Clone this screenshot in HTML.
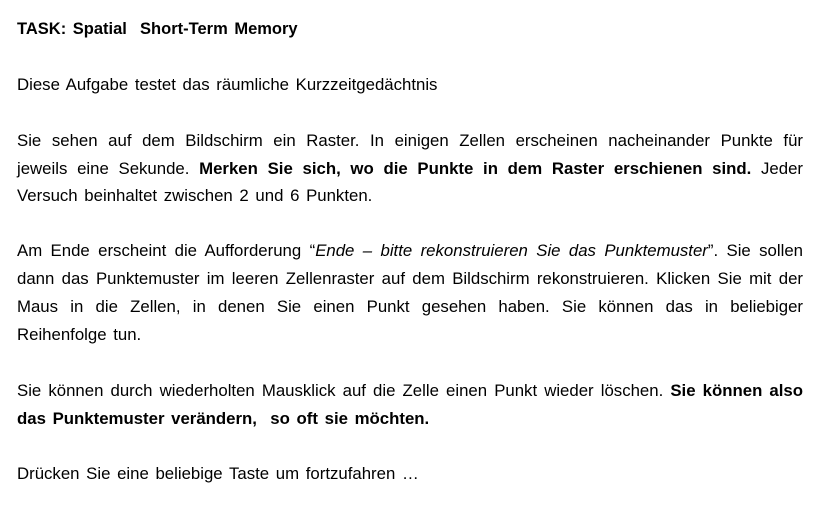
<!DOCTYPE html>
<html><head><meta charset="utf-8"><style>
html,body{margin:0;padding:0;background:#fff;width:830px;height:518px;overflow:hidden}
.l{position:absolute;left:17px;width:786px;height:28px;line-height:28px;font-family:"Liberation Sans",Arial,sans-serif;font-size:16.8px;color:#000;white-space:nowrap;word-spacing:2px}
.j{text-align:justify;text-align-last:justify;white-space:normal}
b{font-weight:bold}
</style></head><body>
<div class="l" style="top:15px;font-size:16.5px"><b>TASK: Spatial&nbsp; Short-Term Memory</b></div>
<div class="l" style="top:71px">Diese Aufgabe testet das räumliche Kurzzeitgedächtnis</div>
<div class="l j" style="top:127px">Sie sehen auf dem Bildschirm ein Raster. In einigen Zellen erscheinen nacheinander Punkte für</div>
<div class="l j" style="top:155px">jeweils eine Sekunde. <b>Merken Sie sich, wo die Punkte in dem Raster erschienen sind.</b> Jeder</div>
<div class="l" style="top:182px">Versuch beinhaltet zwischen 2 und 6 Punkten.</div>
<div class="l j" style="top:237px">Am Ende erscheint die Aufforderung “<i>Ende – bitte rekonstruieren Sie das Punktemuster</i>”. Sie sollen</div>
<div class="l j" style="top:265px">dann das Punktemuster im leeren Zellenraster auf dem Bildschirm rekonstruieren. Klicken Sie mit der</div>
<div class="l j" style="top:293px">Maus in die Zellen, in denen Sie einen Punkt gesehen haben. Sie können das in beliebiger</div>
<div class="l" style="top:321px">Reihenfolge tun.</div>
<div class="l j" style="top:377px">Sie können durch wiederholten Mausklick auf die Zelle einen Punkt wieder löschen. <b>Sie können also</b></div>
<div class="l" style="top:405px"><b>das Punktemuster verändern,&nbsp; so oft sie möchten.</b></div>
<div class="l" style="top:460px">Drücken Sie eine beliebige Taste um fortzufahren …</div>
</body></html>
